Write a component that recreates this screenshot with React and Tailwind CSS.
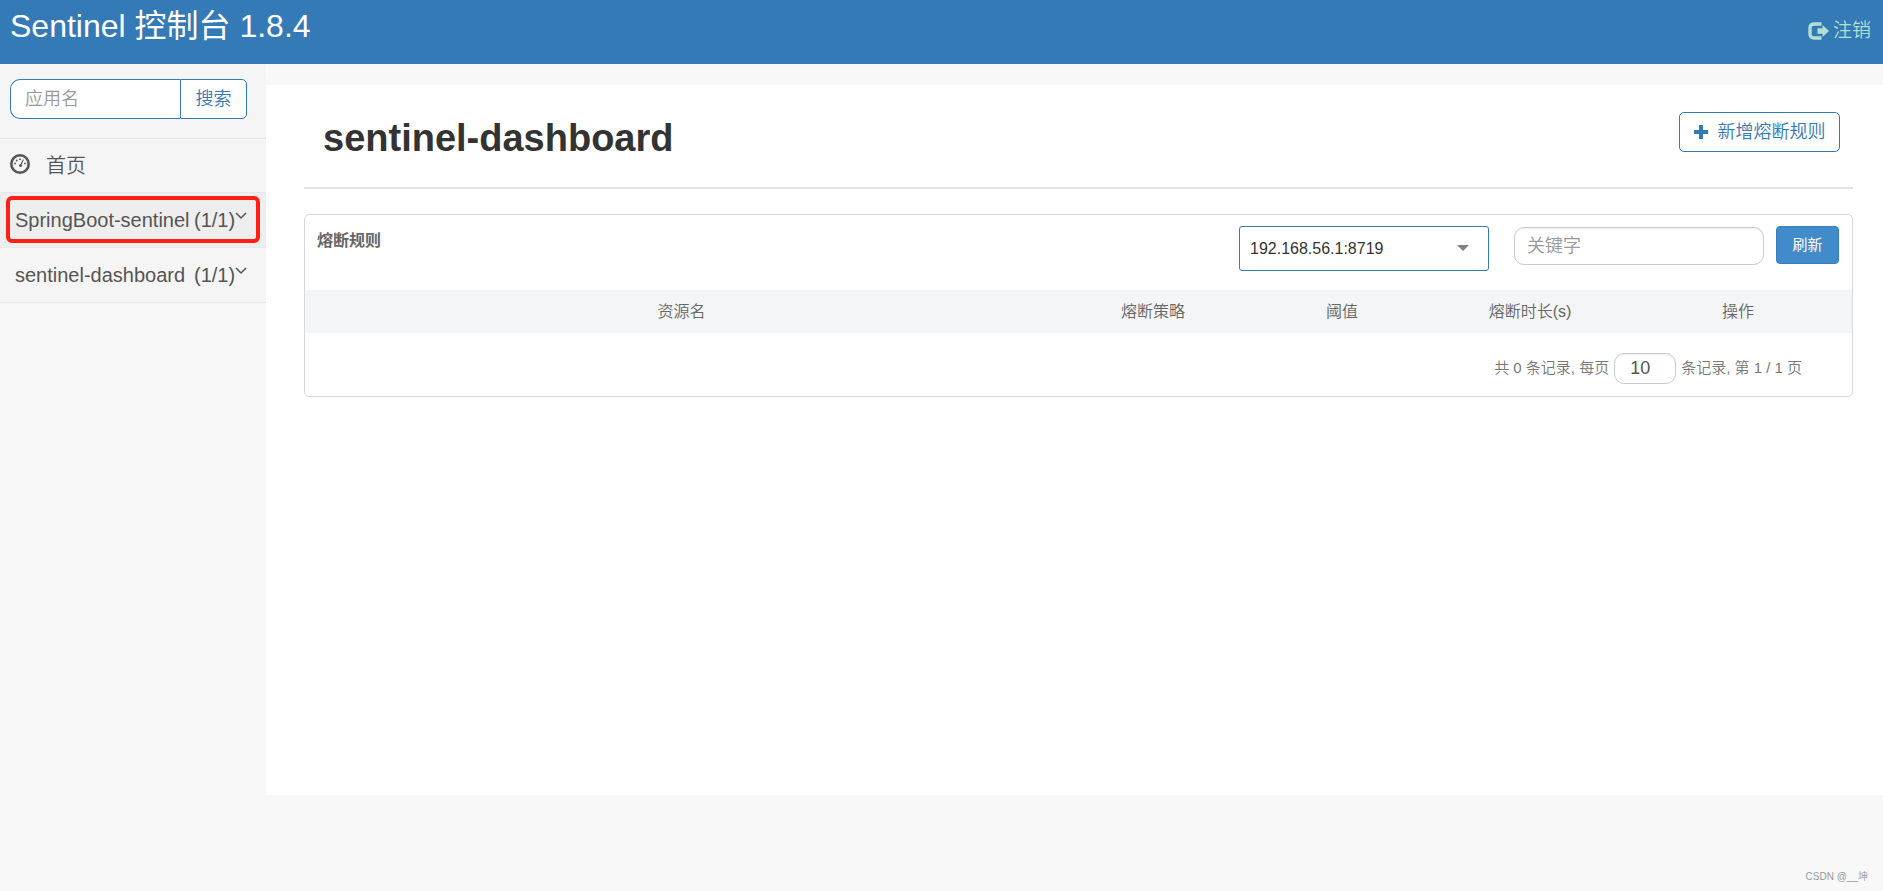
const apps = [
  { name: "SpringBoot-sentinel", count: "(1/1)", active: true },
  { name: "sentinel-dashboard", count: "(1/1)", active: false },
];

const columns = [
  { label: "资源名", width: "w-auto" },
  { label: "熔断策略", width: "w-[190px]" },
  { label: "阈值", width: "w-[188px]" },
  { label: "熔断时长(s)", width: "w-[188px]" },
  { label: "操作", width: "w-[228px]" },
];

function LogoutIcon() {
  return (
    <svg viewBox="0 0 21 18" className="h-[18px] w-[21px]" aria-hidden="true">
      <path d="M13.500 2H6.500Q2 2 2 6v6q0 4 4.500 4h7" fill="none" stroke="currentColor" strokeWidth="3.400" />
      <path d="M9.500 6.300H14.500V3L21 9l-6.500 6v-3.300H9.500z" fill="currentColor" />
    </svg>
  );
}

function DashboardIcon() {
  return (
    <svg viewBox="0 0 20 20" className="size-5" aria-hidden="true">
      <circle cx="10" cy="10" r="8.700" fill="none" stroke="currentColor" strokeWidth="2.600" />
      <g fill="currentColor">
        <circle cx="5" cy="9.500" r="0.900" />
        <circle cx="6.700" cy="6.500" r="0.900" />
        <circle cx="10" cy="5.200" r="0.900" />
        <circle cx="15" cy="9.500" r="0.900" />
        <path d="M12.900 5.200l.9.500-2.100 4.700a1.500 1.500 0 1 1-1.100-.5z" />
      </g>
    </svg>
  );
}

function Chevron() {
  return (
    <svg viewBox="0 0 12 8" className="h-2 w-3" aria-hidden="true">
      <path d="M1 1l5 5 5-5" fill="none" stroke="currentColor" strokeWidth="1.500" />
    </svg>
  );
}

function Header() {
  return (
    <header className="flex h-16 justify-between bg-[#337ab7] pr-3 pl-2.5 text-white">
      <h1 className="mt-1 text-[32px] leading-[44px] font-normal">Sentinel 控制台 1.8.4</h1>
      <a href="#logout" className="flex items-center gap-1 pb-0.5 text-[19px] text-[#b2dfcf]">
        <LogoutIcon />
        注销
      </a>
    </header>
  );
}

function Sidebar() {
  return (
    <nav className="w-[266px] shrink-0 self-start bg-[#f5f5f5] text-[20px] text-[#555]">
      <form className="flex border-b border-[#e7e7e7] px-2.5 pt-[15px] pb-[19px] text-[18px]">
        <input
          type="text"
          aria-label="应用名"
          placeholder="应用名"
          className="h-10 w-[170px] rounded-l-[10px] border border-r-0 border-[#337ab7] bg-white px-3.5 outline-none placeholder:text-[#999]"
        />
        <button type="button" className="h-10 w-[67px] rounded-r-[5px] border border-[#337ab7] bg-white text-[#337ab7]">
          搜索
        </button>
      </form>
      <a href="#home" className="flex h-[54px] items-center gap-4 border-b border-[#e7e7e7] px-2.5">
        <span className="mb-1">
          <DashboardIcon />
        </span>
        首页
      </a>
      {apps.map((app) => (
        <a
          key={app.name}
          href={`#${app.name}`}
          className={`relative flex h-[55px] items-center border-b border-[#e7e7e7] px-[15px] ${
            app.active ? "bg-[#eee]" : ""
          }`}
        >
          <span className="w-[179px]">{app.name}</span>
          <span>{app.count}</span>
          <span className="mb-2">
            <Chevron />
          </span>
          {app.active && (
            <span className="absolute inset-x-1.5 top-[3px] bottom-1 rounded-md border-4 border-[#ff2015]" />
          )}
        </a>
      ))}
    </nav>
  );
}

function RulesCard() {
  return (
    <section className="mt-[25px] rounded-[5px] border border-[#d9d9d9] text-[#666]">
      <div className="flex h-[75px] items-start pt-[11px] pr-[13px] pl-3">
        <h3 className="mr-auto text-[16px] leading-[30px] font-bold">熔断规则</h3>
        <div className="relative mr-[25px]">
          <select
            aria-label="机器"
            className="h-[45px] w-[250px] appearance-none rounded-[3px] border border-[#337ab7] bg-white px-2.5 text-[16px] text-[#333] outline-none"
          >
            <option>192.168.56.1:8719</option>
          </select>
          <span className="pointer-events-none absolute top-[19px] right-5 border-x-[6px] border-t-[6px] border-x-transparent border-t-[#808080]" />
        </div>
        <input
          type="text"
          aria-label="关键字"
          placeholder="关键字"
          className="mt-px mr-3 h-[38px] w-[250px] rounded-[10px] border border-[#ccc] px-3 text-[18px] shadow-[inset_0_1px_1px_rgba(0,0,0,0.075)] outline-none placeholder:text-[#999]"
        />
        <button type="button" className="h-[38px] w-[63px] rounded-[4px] border border-[#357ebd] bg-[#428bca] text-[15px] font-normal text-white">
          刷新
        </button>
      </div>
      <table className="w-full table-fixed text-[16px]">
        <thead>
          <tr className="h-[43px] bg-[#f3f5f7]">
            {columns.map((col) => (
              <th key={col.label} className={`p-0 font-[350] ${col.width}`}>
                {col.label}
              </th>
            ))}
          </tr>
        </thead>
      </table>
      <div className="flex items-center justify-end gap-[5px] pt-5 pr-[50px] pb-3 text-[15px] text-[#777]">
        <label htmlFor="page-size">共 0 条记录, 每页</label>
        <input
          id="page-size"
          type="text"
          defaultValue="10"
          className="h-[31px] w-[62px] rounded-[10px] border border-[#ccc] px-[15px] text-[18px] text-[#555] shadow-[inset_0_1px_1px_rgba(0,0,0,0.075)] outline-none"
        />
        <span>条记录, 第 1 / 1 页</span>
      </div>
    </section>
  );
}

function App() {
  return (
    <div className="flex min-h-screen flex-col bg-[#f8f8f8] font-['Liberation_Sans','Noto_Sans_CJK_SC',sans-serif] font-[350]">
      <Header />
      <div className="flex">
        <Sidebar />
        <main className="mt-[21px] min-h-[710px] flex-1 bg-white pr-[30px] pl-[38px]">
          <div className="flex items-start justify-between border-b-2 border-[#e5e5e5] pt-[27px] pr-[13px] pb-[29px] pl-[19px]">
            <h2 className="mt-1.5 text-[38px] leading-10 font-bold text-[#333]">sentinel-dashboard</h2>
            <button
              type="button"
              className="flex h-10 w-[161px] items-center justify-center gap-2.5 rounded-[5px] border border-[#337ab7] text-[18px] text-[#337ab7]"
            >
              <svg viewBox="0 0 14 14" className="size-3.5" aria-hidden="true">
                <path d="M5 0h4v5h5v4H9v5H5V9H0V5h5z" fill="currentColor" />
              </svg>
              新增熔断规则
            </button>
          </div>
          <RulesCard />
        </main>
      </div>
      <footer className="mt-auto pr-[15px] pb-[7px] text-right text-[10px] text-[#999]">CSDN @__坤</footer>
    </div>
  );
}

export default App;
